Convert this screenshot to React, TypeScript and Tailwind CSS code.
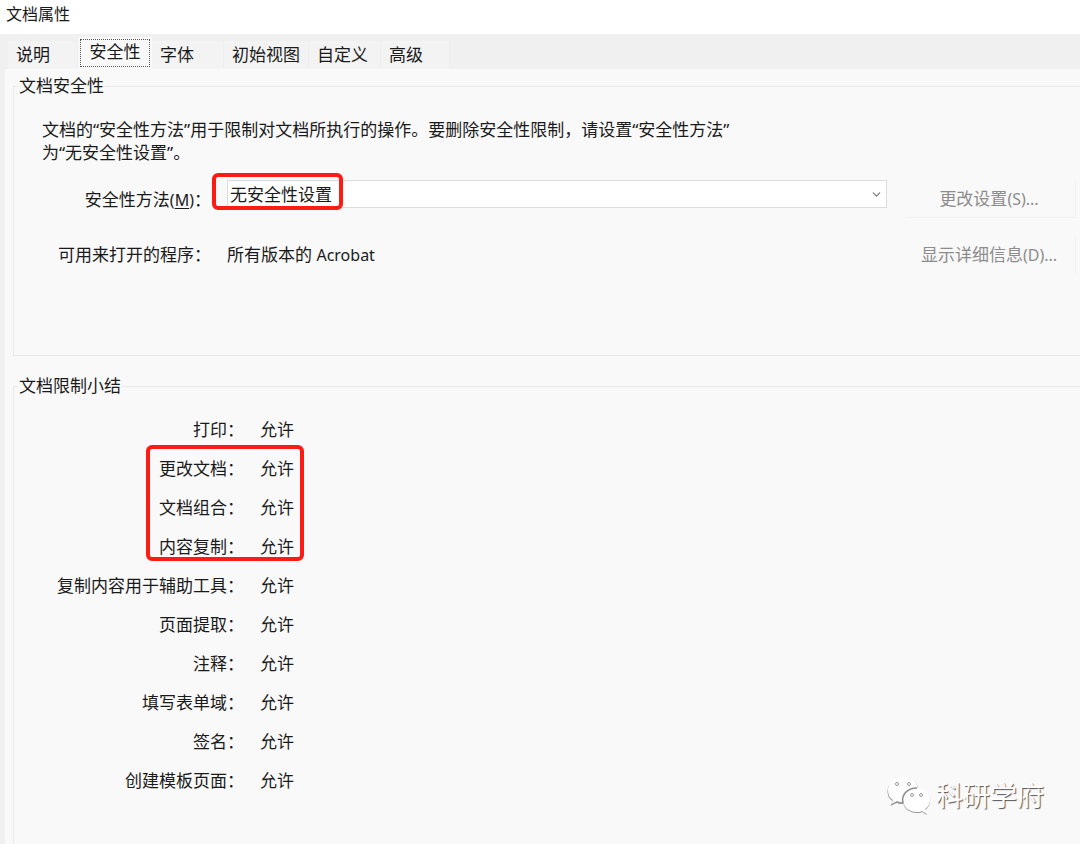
import React from 'react';
import { ChevronDown } from 'lucide-react';

const TABS = [
  { name: '说明', width: 'w-[70px]' },
  { name: '安全性', width: 'w-[74px]' },
  { name: '字体', width: 'w-[72px]' },
  { name: '初始视图', width: 'w-[85px]' },
  { name: '自定义', width: 'w-[72px]' },
  { name: '高级', width: 'w-[69px]' },
];

// Grouped so that the middle rows can share one highlight frame
const RESTRICTIONS = [
  { highlighted: false, rows: ['打印'] },
  { highlighted: true, rows: ['更改文档', '文档组合', '内容复制'] },
  {
    highlighted: false,
    rows: ['复制内容用于辅助工具', '页面提取', '注释', '填写表单域', '签名', '创建模板页面'],
  },
];

const Tabs: React.FC = () => (
  <div role="tablist" className="flex items-end h-[35px] pl-2">
    {TABS.map((tab) =>
      tab.name === '安全性' ? (
        <button
          key={tab.name}
          role="tab"
          aria-selected="true"
          className={`${tab.width} h-8 p-0.5 bg-[#f9f9f9]`}
        >
          <span className="flex h-full justify-center border border-dotted border-[#555] leading-6">
            {tab.name}
          </span>
        </button>
      ) : (
        <button
          key={tab.name}
          role="tab"
          aria-selected="false"
          className={`${tab.width} h-7 pl-2 text-left leading-7 bg-[#f3f3f3] border-r border-[#eeeeee]`}
        >
          {tab.name}
        </button>
      )
    )}
  </div>
);

const SecuritySection: React.FC = () => (
  <fieldset className="h-[282px] ml-2 border border-r-0 border-[#e9e9e9]">
    <legend className="ml-1 px-px leading-6">文档安全性</legend>
    <p className="ml-7 mt-5 leading-[23px]">
      文档的“安全性方法”用于限制对文档所执行的操作。要删除安全性限制，请设置“安全性方法”
      <br />
      为“无安全性设置”。
    </p>

    <div className="flex items-start mt-4">
      <label htmlFor="method" className="w-[197px] shrink-0 pt-2 text-right leading-6">
        安全性方法
        <span className="text-base leading-6">
          (<u className="decoration-1 underline-offset-2">M</u>)
        </span>
        ：
      </label>
      <div className="relative grow ml-4 mr-5">
        <select
          id="method"
          className="block w-full h-7 pl-0.5 pt-0.5 appearance-none bg-white border border-[#dcdcdc]"
        >
          <option>无安全性设置</option>
        </select>
        <ChevronDown
          size={13}
          strokeWidth={2}
          className="absolute right-1 top-2 text-[#777] pointer-events-none"
        />
        <div className="absolute -left-[15px] -top-[7px] w-[131px] h-[37px] border-4 border-[#fb1d14] rounded-md pointer-events-none" />
      </div>
      <button
        disabled
        className="w-[169px] h-[38px] mr-1 shrink-0 pr-1 text-[#8c8c8c] border-r border-b border-[#f2f2f2]"
      >
        更改设置<span className="text-base">(S)...</span>
      </button>
    </div>

    <div className="flex items-center mt-[18px]">
      <span className="w-[197px] shrink-0 text-right">可用来打开的程序：</span>
      <span className="grow ml-4">
        所有版本的 <span className="text-base">Acrobat</span>
      </span>
      <button
        disabled
        className="w-[169px] h-[38px] mr-1 shrink-0 pr-1 text-[#8c8c8c] border-r border-[#f2f2f2]"
      >
        显示详细信息<span className="text-base">(D)...</span>
      </button>
    </div>
  </fieldset>
);

const RestrictionsSection: React.FC = () => (
  <fieldset className="grow ml-2 mt-[18px] border border-r-0 border-b-0 border-[#e9e9e9]">
    <legend className="ml-1 px-px leading-6">文档限制小结</legend>
    <table className="mt-3 border-collapse">
      {RESTRICTIONS.map((group, i) => (
        <tbody key={i} className="relative">
          {group.rows.map((row, j) => (
            <tr key={row} className="h-[39px]">
              <th scope="row" className="w-[230px] p-0 text-right font-normal">
                {row}：
                {group.highlighted && j === 0 && (
                  <div className="absolute left-[132px] -top-1 w-[158px] h-[116px] border-4 border-[#fb1d14] rounded-md pointer-events-none" />
                )}
              </th>
              <td className="p-0 pl-4">允许</td>
            </tr>
          ))}
        </tbody>
      ))}
    </table>
  </fieldset>
);

const Watermark: React.FC = () => (
  <div className="absolute right-9 bottom-7 flex items-center gap-1 text-[27px] leading-10 text-white">
    <svg width="46" height="40" viewBox="0 0 46 40" aria-hidden="true">
      <g fill="#999" transform="translate(0 1)">
        <path d="M17 1C8 1 1.500 7 1.500 14c0 5 2 8 5 10l-2 5 6-3c2 1 4 1 7 1 8 0 15-5 15-13S26 1 17 1Z" />
        <path d="M31 12c-8 0-14 5-14 12s6 12 14 12c2 0 4 0 5-1l5 3-2-5c3-2 5-5 5-9 0-7-6-12-13-12Z" />
      </g>
      <path
        d="M17 1C8 1 2 7 2 14c0 5 2 8 5 10l-2 4 6-3c2 1 4 1 6 1 8 0 15-5 15-12S26 1 17 1Z"
        fill="#fff"
      />
      <path
        d="M31 12c-8 0-14 5-14 12s6 12 14 12c2 0 4 0 5-1l5 3-2-5c3-2 5-5 5-9 0-7-6-12-13-12Z"
        fill="#fff"
      />
      <path d="M17 27c-2-8 4-15 14-15" fill="none" stroke="#8a8a8a" strokeWidth="1.5" />
      <g fill="#fff" stroke="#999" strokeWidth="1">
        <circle cx="11" cy="8" r="1.5" />
        <circle cx="23" cy="8" r="1.5" />
        <circle cx="26" cy="19" r="1.5" />
        <circle cx="35" cy="19" r="1.5" />
      </g>
    </svg>
    <span className="[text-shadow:1px_1px_1px_#555]">科研学府</span>
  </div>
);

const App: React.FC = () => {
  return (
    <div
      lang="zh-CN"
      className="relative flex flex-col min-h-screen overflow-hidden bg-[#f0f0f0] text-[17px] leading-6 text-[#1a1a1a] font-['Noto_Sans','Noto_Sans_CJK_SC',sans-serif]"
    >
      <h1 className="h-[34px] pl-1.5 pt-0.5 bg-white text-base leading-6">文档属性</h1>
      <Tabs />
      <main className="grow flex flex-col ml-[5px] pt-[5px] bg-[#f9f9f9]">
        <SecuritySection />
        <RestrictionsSection />
      </main>
      <Watermark />
    </div>
  );
};

export default App;
